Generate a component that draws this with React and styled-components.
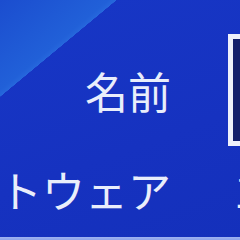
import React from "react";
import styled, { createGlobalStyle } from "styled-components";

const Global = createGlobalStyle`
  html, body { margin: 0; padding: 0; background: #1633c2; }
  * { box-sizing: border-box; }
`;

const Screen = styled.div`
  width: 240px;
  height: 240px;
  overflow: hidden;
  display: flex;
  flex-direction: column;
  padding-top: 34px;
  background:
    linear-gradient(140.3deg, #1b4dcf 0%, #2160d8 20.5%, #2667dc 22%, rgba(0,0,0,0) 22.1%),
    linear-gradient(160deg, #1737c6 0%, #1632c0 60%, #1430bb 100%);
  font-family: "Noto Sans CJK JP", sans-serif;
  color: #e9eefb;
`;

const Form = styled.div`
  display: grid;
  grid-template-columns: 171px 200px;
  column-gap: 57px;
  row-gap: 22px;
  align-items: center;
`;

const Label = styled.div`
  display: flex;
  justify-content: flex-end;
  white-space: nowrap;
  font-size: 43px;
  line-height: 43px;
  font-weight: 400;
`;

const Field = styled.div`
  height: 112px;
  border: 5px solid #eef1fb;
  background: #13206c;
`;

const Value = styled.div`
  white-space: nowrap;
  padding-left: 6px;
  font-size: 43px;
  line-height: 43px;
  font-weight: 400;
`;

const BottomRule = styled.div`
  margin-top: auto;
  height: 3px;
  background: linear-gradient(#9fb3f2, #8ea3ea);
`;

export default function App() {
  return (
    <>
      <Global />
      <Screen>
        <Form>
          <Label>名前</Label>
          <Field />
          <Label>ソフトウェア</Label>
          <Value>1.00</Value>
        </Form>
        <BottomRule />
      </Screen>
    </>
  );
}
